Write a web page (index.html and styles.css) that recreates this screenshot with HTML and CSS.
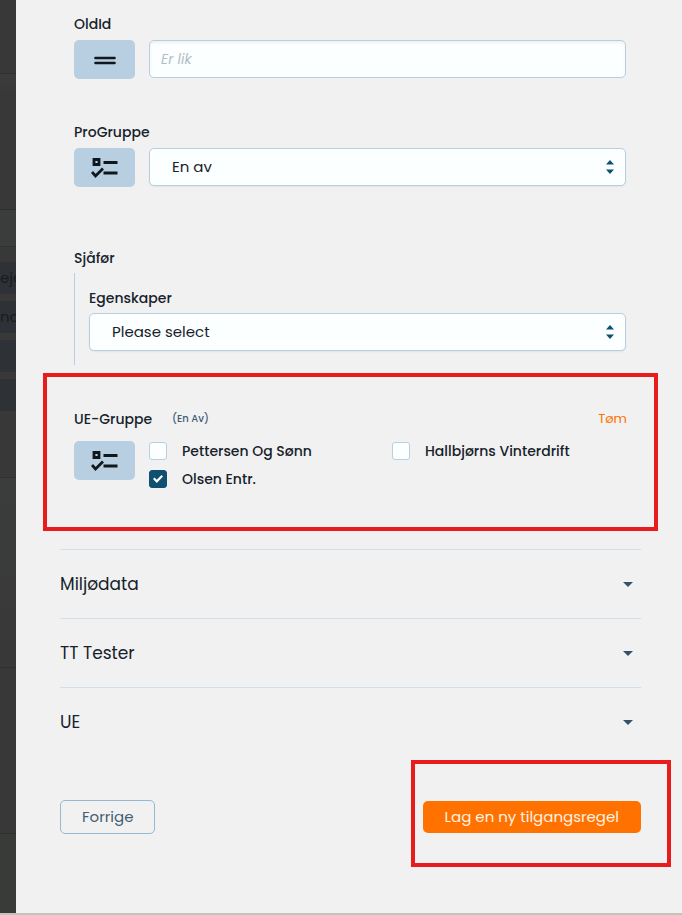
FILE: index.html
```
<!DOCTYPE html>
<html lang="no">
<head>
  <meta charset="UTF-8" />
  <meta name="viewport" content="width=device-width, initial-scale=1.0" />
  <title>Ny tilgangsregel</title>
  <link rel="stylesheet" href="styles.css">
</head>
<body>
  <!-- Shared icons -->
  <svg class="sprite" aria-hidden="true">
    <symbol id="icon-checklist" viewBox="0 0 28 24">
      <path d="M3 3.500h5v5H3z M12.500 6.500h14 M12.500 17h14 M1 16l3.500 4 7.500-7.500" fill="none" stroke="currentColor" stroke-width="2.800" />
    </symbol>
    <symbol id="icon-sort" viewBox="0 0 8 14">
      <path d="M4 0l4 4.500H0z M0 9.500h8L4 14z" fill="currentColor" />
    </symbol>
  </svg>

  <div class="page">
    <!-- Dimmed page behind the drawer -->
    <div class="backdrop" aria-hidden="true">
      <div class="backdrop-head"></div>
      <div class="backdrop-body"></div>
      <div class="backdrop-field"></div>
      <div class="backdrop-list">
        <div class="backdrop-row">ejd</div>
        <div class="backdrop-row">nch</div>
        <div class="backdrop-row"></div>
        <div class="backdrop-row"></div>
      </div>
      <div class="backdrop-card tinted"></div>
      <div class="backdrop-card"></div>
      <div class="backdrop-foot"></div>
    </div>

    <main class="drawer">
      <div class="field">
        <label class="field-label" for="old-id">OldId</label>
        <div class="field-row">
          <button class="operator" type="button" aria-label="Er lik">
            <svg width="22" height="10" viewBox="0 0 22 10"><path d="M1.500 3h19M1.500 8h19" stroke="currentColor" stroke-width="2.600" stroke-linecap="round" /></svg>
          </button>
          <input class="control text-input" id="old-id" type="text" placeholder="Er lik" />
        </div>
      </div>

      <div class="field">
        <label class="field-label" for="pro-gruppe">ProGruppe</label>
        <div class="field-row">
          <button class="operator" type="button" aria-label="En av">
            <svg width="28" height="24"><use href="#icon-checklist" /></svg>
          </button>
          <div class="select-wrap">
            <select class="control" id="pro-gruppe"><option>En av</option></select>
            <svg class="select-icon" width="8" height="14"><use href="#icon-sort" /></svg>
          </div>
        </div>
      </div>

      <div class="field nested">
        <span class="field-label">Sjåfør</span>
        <div class="nested-body">
          <label class="field-label" for="egenskaper">Egenskaper</label>
          <div class="select-wrap">
            <select class="control" id="egenskaper"><option>Please select</option></select>
            <svg class="select-icon" width="8" height="14"><use href="#icon-sort" /></svg>
          </div>
        </div>
      </div>

      <section class="highlight group">
        <div class="group-head">
          <span class="field-label">UE-Gruppe</span>
          <span class="hint">(En Av)</span>
          <button class="clear" type="button">Tøm</button>
        </div>
        <div class="field-row">
          <button class="operator" type="button" aria-label="En av">
            <svg width="28" height="24"><use href="#icon-checklist" /></svg>
          </button>
          <div class="options">
            <label class="option"><input type="checkbox" />Pettersen Og Sønn</label>
            <label class="option"><input type="checkbox" />Hallbjørns Vinterdrift</label>
            <label class="option"><input type="checkbox" checked />Olsen Entr.</label>
          </div>
        </div>
      </section>

      <div class="accordion">
        <button class="accordion-item" type="button">Miljødata<span class="caret"></span></button>
        <button class="accordion-item" type="button">TT Tester<span class="caret"></span></button>
        <button class="accordion-item" type="button">UE<span class="caret"></span></button>
      </div>

      <footer class="actions">
        <button class="btn btn-outline" type="button">Forrige</button>
        <div class="highlight submit">
          <button class="btn btn-primary" type="submit">Lag en ny tilgangsregel</button>
        </div>
      </footer>
    </main>
  </div>
</body>
</html>
```
FILE: styles.css
```
:root {
  --bg: #f1f1f1;
  --bg-control: #fbffff;
  --border: #b8cee1;
  --text: #17222b;
  --blue: #0f4f70;
  --slate: #3f5d73;
  --orange: #ff7200;
  --red: #e81c1c;
}

* {
  box-sizing: border-box;
}
body {
  margin: 0;
  background: var(--bg);
  color: var(--text);
  font-family: Poppins, Inter, "Open Sans", sans-serif;
  font-size: 15px;
  line-height: 20px;
}
button,
input,
select {
  font: inherit;
  color: inherit;
}
button {
  cursor: pointer;
}
svg {
  display: block;
}
.sprite {
  display: none;
}

.page {
  display: grid;
  grid-template-columns: 16px 1fr;
  min-height: 100vh;
  border-bottom: 2px solid #c3c3bb;
}

/* Dimmed page behind */
.backdrop {
  display: flex;
  flex-direction: column;
  overflow: hidden;
  background: #393838;
  color: #181b1d;
}
.backdrop-head {
  height: 74px;
  border-bottom: 1px solid #303030;
}
.backdrop-body {
  height: 136px;
  border-bottom: 1px solid #2c2d2d;
  background: linear-gradient(#3a3d3c, #393838 20px);
}
.backdrop-field {
  height: 37px;
  border-bottom: 1px solid #2e333a;
  background: #3a3d3b;
}
.backdrop-list {
  display: grid;
  gap: 7px;
  padding: 15px 0 66px;
}
.backdrop-row {
  height: 32px;
  background: #2e3237;
  line-height: 32px;
}
.backdrop-card {
  height: 190px;
  border-top: 1px solid #303030;
}
.backdrop-card.tinted {
  background: linear-gradient(#3a3d3c, #393838);
}
.backdrop-card + .backdrop-card {
  height: 166px;
}
.backdrop-foot {
  flex: 1;
  border-top: 1px solid #303030;
  background: #393b39;
}

/* Drawer */
.drawer {
  min-width: 0;
  padding: 14px 41px 44px 44px;
}
.field {
  margin: 0 15px 43px 14px;
}
.field-label {
  display: block;
  margin-bottom: 6px;
  font-size: 14px;
  font-weight: 500;
}
.field-row {
  display: flex;
  align-items: flex-start;
  gap: 14px;
}
.operator {
  display: flex;
  flex: none;
  align-items: center;
  justify-content: center;
  width: 61px;
  height: 39px;
  padding: 0;
  border: 0;
  border-radius: 5px;
  background: var(--border);
  color: #11181d;
}
.control {
  width: 100%;
  height: 38px;
  border: 1px solid var(--border);
  border-radius: 5px;
  background: var(--bg-control);
}
.text-input {
  flex: 1;
  min-width: 0;
  padding: 0 11px;
  font-size: 14px;
  box-shadow: inset 0 2px 3px rgba(0, 0, 0, 0.06);
}
.text-input::placeholder {
  color: #b3bec7;
  font-style: italic;
}
.select-wrap {
  position: relative;
  flex: 1;
}
.select-wrap .control {
  display: block;
  padding: 0 36px 0 22px;
  appearance: none;
  box-shadow: 0 1px 2px rgba(0, 0, 0, 0.06);
}
.select-icon {
  position: absolute;
  top: 12px;
  right: 12px;
  color: var(--blue);
  pointer-events: none;
}

/* Nested properties */
.nested {
  margin-top: 61px;
  margin-bottom: 8px;
}
.nested .field-label {
  margin-bottom: 5px;
}
.nested-body {
  padding: 15px 0 14px 14px;
  border-left: 1px solid var(--border);
}

/* Marked areas */
.highlight {
  border: 4px solid var(--red);
}
.group {
  margin: 0 -17px 18px;
  padding: 32px 27px 38px;
}
.group-head {
  display: flex;
  align-items: center;
  margin-bottom: 12px;
}
.group-head .field-label {
  margin: 0;
}
.hint {
  margin-left: 20px;
  color: var(--slate);
  font-size: 10px;
  font-weight: 500;
}
.clear {
  margin-left: auto;
  padding: 0;
  border: 0;
  background: none;
  color: var(--orange);
  font-size: 13px;
}
.options {
  display: grid;
  flex: 1;
  grid-template-columns: 1fr 1fr;
  gap: 8px;
}
.option {
  display: flex;
  align-items: center;
  gap: 15px;
  font-size: 14px;
  font-weight: 500;
  white-space: nowrap;
}
.option input {
  display: grid;
  flex: none;
  place-items: center;
  width: 18px;
  height: 18px;
  margin: 0;
  border: 1px solid var(--border);
  border-radius: 3px;
  background: var(--bg-control);
  appearance: none;
}
.option input:checked {
  border-color: var(--blue);
  background: var(--blue);
}
.option input:checked::before {
  content: "";
  width: 10px;
  height: 8px;
  background: #fff;
  clip-path: polygon(0 50%, 15% 32%, 38% 60%, 85% 0, 100% 18%, 38% 100%);
}

/* Accordion */
.accordion-item {
  display: flex;
  align-items: center;
  justify-content: space-between;
  width: 100%;
  height: 69px;
  padding: 0 8px 0 0;
  border: 0;
  border-top: 1px solid #d3dfe9;
  background: none;
  font-size: 17px;
}
.caret {
  border: 5px solid transparent;
  border-top-color: #34536a;
  border-bottom: 0;
}

/* Actions */
.actions {
  display: flex;
  align-items: flex-start;
  justify-content: space-between;
  margin: 4px -30px 0 0;
}
.btn {
  border-radius: 5px;
}
.btn-outline {
  height: 34px;
  margin-top: 40px;
  padding: 0 21px;
  border: 1px solid #94b9d1;
  background: none;
  color: var(--slate);
}
.submit {
  padding: 37px 26px 30px 8px;
}
.btn-primary {
  display: block;
  height: 32px;
  padding: 0 22px;
  border: 0;
  background: var(--orange);
  color: #fff3e6;
}
```
